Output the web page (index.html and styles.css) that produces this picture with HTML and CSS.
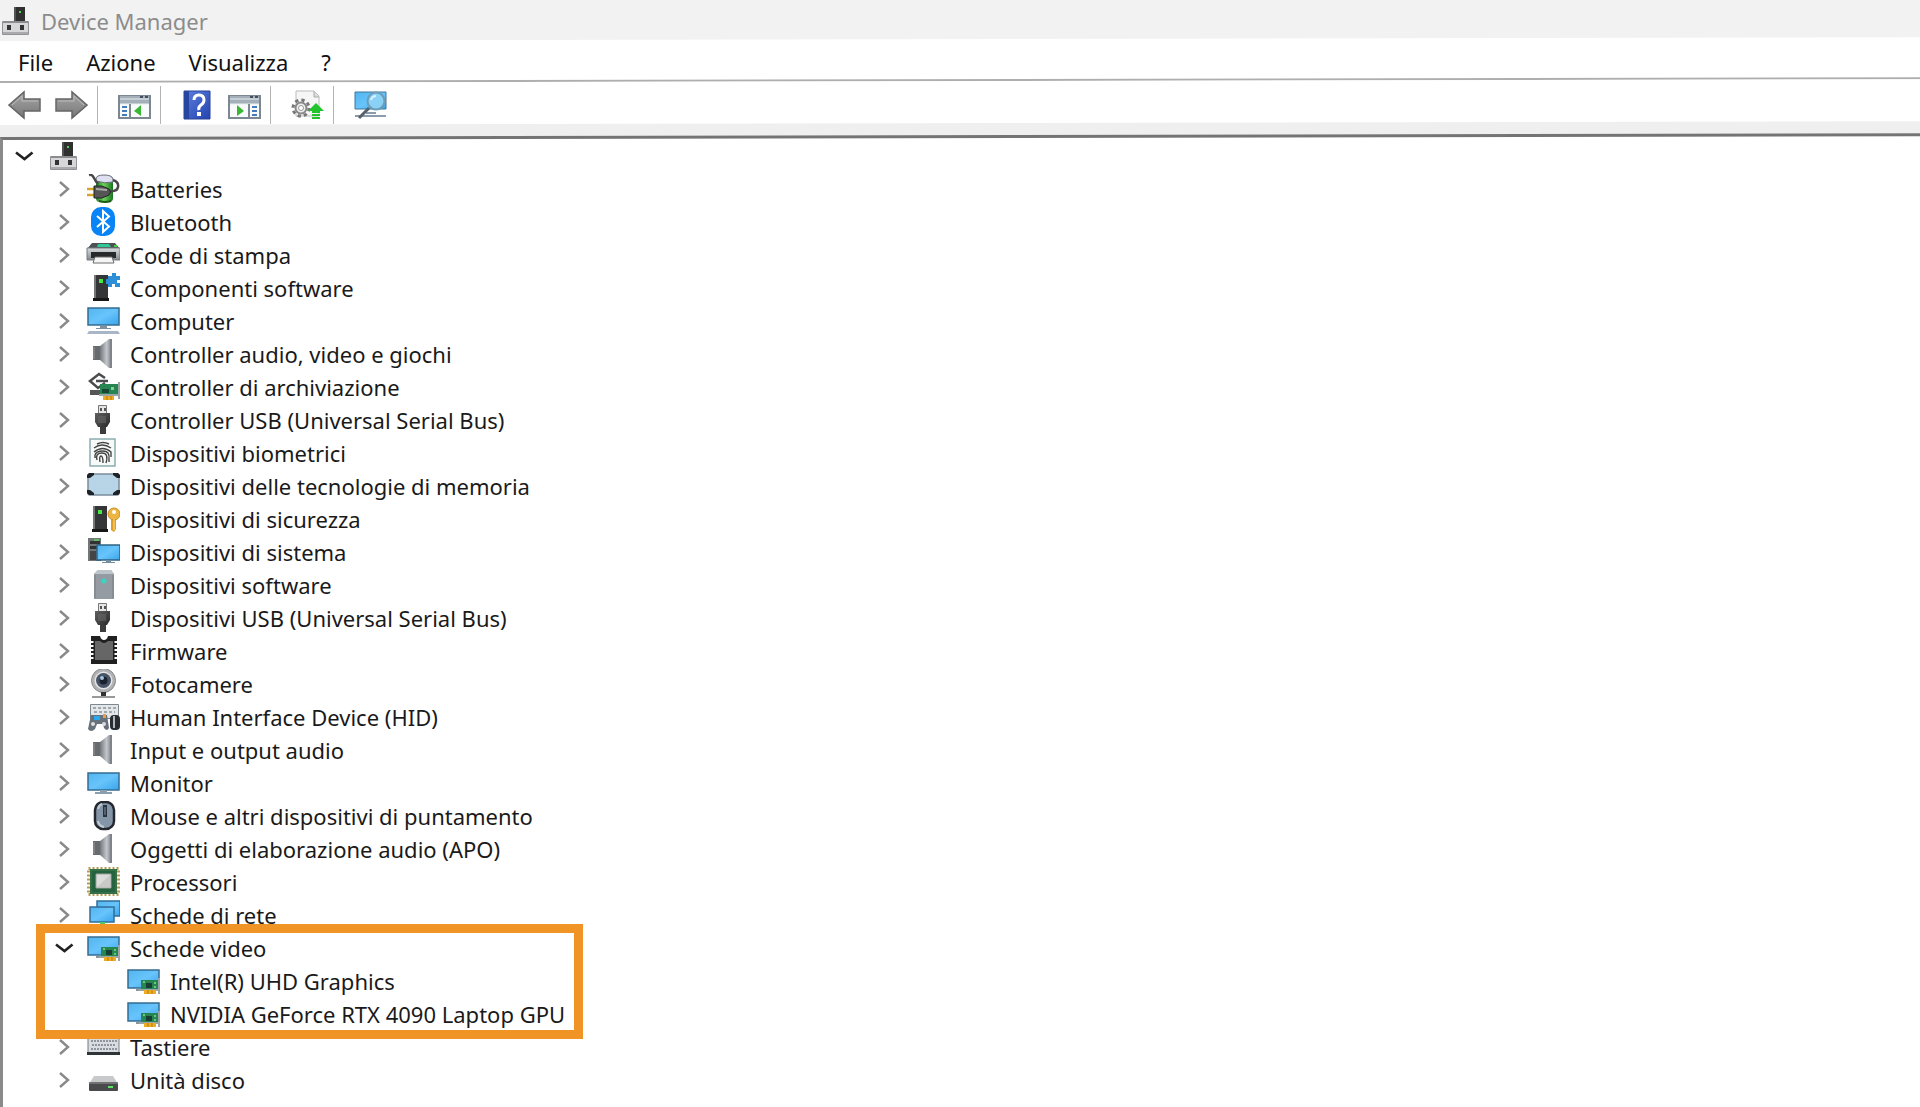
FILE: index.html
```html
<!DOCTYPE html>
<html lang="it">
<head>
<meta charset="utf-8">
<title>Device Manager</title>
<link rel="stylesheet" href="styles.css">
</head>
<body>
<svg class="sprite" aria-hidden="true">
  <defs>
    <linearGradient id="screen" x1="0" y1="0" x2="1" y2="1"><stop offset="0" stop-color="#52b4ee"/><stop offset=".5" stop-color="#68c4fb"/><stop offset="1" stop-color="#38a4ec"/></linearGradient>
    <linearGradient id="metal" x1="0" x2="1"><stop offset="0" stop-color="#74777b"/><stop offset=".55" stop-color="#c3c6ca"/><stop offset="1" stop-color="#777b82"/></linearGradient>
    <linearGradient id="steel" x1="0" y1="0" x2="0" y2="1"><stop offset="0" stop-color="#d9dcdf"/><stop offset="1" stop-color="#85898e"/></linearGradient>
    <linearGradient id="dark" x1="0" y1="0" x2="1" y2="1"><stop offset="0" stop-color="#606060"/><stop offset="1" stop-color="#292929"/></linearGradient>
    <linearGradient id="arrow" x1="0" y1="0" x2="0" y2="1"><stop offset="0" stop-color="#a7a7a7"/><stop offset="1" stop-color="#777"/></linearGradient>
    <linearGradient id="book" x1="0" y1="0" x2="1" y2="1"><stop offset="0" stop-color="#5d7fe0"/><stop offset="1" stop-color="#2444ae"/></linearGradient>
    <linearGradient id="green" x1="0" x2="1"><stop offset="0" stop-color="#187c1d"/><stop offset=".45" stop-color="#70d35d"/><stop offset="1" stop-color="#15751d"/></linearGradient>
  </defs>
  <symbol id="i-chevron" viewBox="0 0 24 24"><path d="M8 5l8 7-8 7" fill="none" stroke="#898989" stroke-width="2.4"/></symbol>
  <symbol id="i-open" viewBox="0 0 24 24"><path d="M4 8.500l8.500 6.500 8-6.500" fill="none" stroke="#222" stroke-width="2.600"/></symbol>
  <symbol id="i-root" viewBox="0 0 34 30"><path d="M16 1h11v14H16z" fill="#303030"/><path d="M17 1v14" stroke="#777"/><path d="M21 5h2v2h-2z" fill="#58d052"/><path d="M4.500 15.500h26v13h-26z" fill="#d7d7db" stroke="#929297"/><path d="M5 16h25" stroke="#8c8c90" stroke-width="2"/><path d="M9 19h4v5H9zM22 19h4v5h-4z" fill="#333"/><path d="M5 27h25" stroke="#a9a9ae" stroke-width="2"/></symbol>
  <symbol id="i-battery" viewBox="0 0 34 30"><rect x="10" y="2" width="17" height="26" rx="4" fill="url(#green)"/><path d="M10 7V5q0-4 8-4t9 4v3q-8 2-17-1z" fill="#dedff0" stroke="#666b77"/><path d="M3 1q3-1 5 3t4 6M23 17q8 1 9-4t-5-7" fill="none" stroke="#484848" stroke-width="2.500"/><path d="M1 15h8M1 21h8" stroke="#d3a72c" stroke-width="2.500"/><path d="M8 12h8l7 3q3 3 0 6l-7 3H8z" fill="#555" stroke="#242424"/><path d="M10 15l11 1" stroke="#aaa" stroke-width="2"/><path d="M13 27q6 2 12 0" stroke="#185c17" stroke-width="2" fill="none"/></symbol>
  <symbol id="i-bluetooth" viewBox="0 0 34 30"><rect x="5" width="24" height="29" rx="10" fill="#0884f7"/><path d="M11 9l12 10.500-6 5.500V4l6 5.500L11 20" fill="none" stroke="#fff" stroke-width="2"/></symbol>
  <symbol id="i-printer" viewBox="0 0 34 30"><path d="M6 3h23l5 6H1z" fill="#4c5154"/><path d="M12 4h11l2 3H11z" fill="#2fc795"/><path d="M1 8h33v12H1z" fill="url(#steel)" stroke="#777c80"/><path d="M5 12h25v6H5z" fill="#28292b"/><path d="M9 17h17l2 6H7z" fill="#f5f5f5" stroke="#6d6d6d"/><path d="M28 6h3" stroke="#4c4" stroke-width="2"/></symbol>
  <symbol id="i-tower" viewBox="0 0 34 30"><path d="M8 2h14v23H8z" fill="#343637"/><path d="M9 2v23" stroke="#777" stroke-width="2"/><path d="M7 25h16v3H7z" fill="#171717"/><path d="M13 6h4v4h-4z" fill="#49e944"/></symbol>
  <symbol id="i-component" viewBox="0 0 34 30"><use href="#i-tower"/><path d="M22 3h4V0h4v3h4v4h-3v3h3v4h-5v-3h-3v3h-4v-3h-2V6h2z" fill="#2c8fd7"/></symbol>
  <symbol id="i-computer" viewBox="0 0 34 30"><path d="M2 2h31v17H2z" fill="url(#screen)" stroke="#356c91" stroke-width="1.500"/><path d="M14 20h7v2h4v1H10v-1h4z" fill="#80909d"/><path d="M3 25h29l2 3H1z" fill="#a9b6c5"/></symbol>
  <symbol id="i-speaker" viewBox="0 0 34 30"><path d="M7 7h8v14H7z" fill="#666b70"/><path d="M14 7L23 0h3v29h-3l-9-8z" fill="url(#metal)"/><path d="M25 0v29" stroke="#7e838b" stroke-width="2"/><path d="M8 8v12" stroke="#999" stroke-width="1"/></symbol>
  <symbol id="i-card" viewBox="0 0 34 30"><path d="M15 14h17v10H15z" fill="#278552"/><path d="M13 24h20M33 12v16" stroke="#9ba5a9" stroke-width="2"/><path d="M18 24h12v4H18z" fill="#edab22"/><path d="M22 24v4M26 24v4" stroke="#b77d14"/><path d="M20 17h6v5h-6z" fill="#193e33"/><path d="M17 16h2M28 17h2M28 21h2" stroke="#7fe090" stroke-width="1.500"/></symbol>
  <symbol id="i-storage" viewBox="0 0 34 30"><path d="M19 6l-6-4-9 7 8 7 7-5M10 9h12" fill="none" stroke="#4a4c4d" stroke-width="2.500"/><path d="M4 18h10v5H4z" fill="#555"/><path d="M14 12h18v11H14z" fill="#278552"/><path d="M13 23h20M33 10v17" stroke="#9ba5a9" stroke-width="2"/><path d="M17 24h11v4H17z" fill="#edab22"/><path d="M21 24v4M25 24v4" stroke="#b77d14"/><path d="M16 17h7v4h-7z" fill="#174834"/><path d="M25 15h3v3h-3z" fill="#86d292"/></symbol>
  <symbol id="i-usb" viewBox="0 0 34 30"><path d="M12.500.5h8v8h-8z" fill="#e5e5e5" stroke="#777"/><path d="M14 3h2v3h-2zM18 3h2v3h-2z" fill="#555"/><path d="M9 8h15v9l-3 5h-9l-3-5z" fill="url(#dark)"/><path d="M14 22h6v7h-6z" fill="#3c3c3c"/><path d="M12 11h8v7h-8z" fill="#666" opacity=".6"/></symbol>
  <symbol id="i-finger" viewBox="0 0 34 30"><path d="M4 1h25v27H4z" fill="#f6faf9" stroke="#8cadb0" stroke-width="1.500"/><g fill="none" stroke="#444" stroke-width="1.400"><path d="M11 6q6-3 12 0M8 10q8-6 17 0M8 14q9-7 17 0v5M9 17q1-4 8-4t6 8v3M11 22q-2-7 5-7t4 10M14 24q-1-6 1-6t2 7M9 17v3"/></g></symbol>
  <symbol id="i-memory" viewBox="0 0 34 30"><rect x="2" y="3" width="31" height="21" rx="2" fill="#b8d5e7" stroke="#788e9c" stroke-width="1.500"/><path d="M1 7V4l2-2h5v2l-4 3zM27 2h5l2 2v3h-3l-4-3zM1 19v3l2 2h5v-2l-4-3zM34 19v3l-2 2h-5v-2l4-3z" fill="#202326"/></symbol>
  <symbol id="i-security" viewBox="0 0 34 30"><use href="#i-tower" x="-1"/><path d="M25 13h5v12l-2 3-3-2z" fill="#dd9e24"/><circle cx="28" cy="10" r="6" fill="#edb642" stroke="#c88c25"/><circle cx="28" cy="8" r="2" fill="#fff"/><path d="M28 15v11" stroke="#ffe096"/></symbol>
  <symbol id="i-system" viewBox="0 0 34 30"><path d="M2 1h13v23H2z" fill="#717679"/><path d="M4 4h10v3H4zM4 9h7v3H4z" fill="#303332"/><path d="M8 3h5" stroke="#64ba67" stroke-width="2"/><path d="M4 14h6v9H4z" fill="#444"/><path d="M11 8h23v15H11z" fill="url(#screen)" stroke="#2f6384" stroke-width="1.500"/><path d="M20 23h5v2h4v1H16v-1h4z" fill="#738d9c"/></symbol>
  <symbol id="i-software" viewBox="0 0 34 30"><path d="M8 4l4-4h13l3 4v25H8z" fill="#949ba2"/><path d="M8 4l4-4h13l3 4z" fill="#bdc4ca"/><path d="M9 5v23M27 5v23" stroke="#777f86"/><circle cx="18" cy="11" r="2.500" fill="#35d8c2"/></symbol>
  <symbol id="i-firmware" viewBox="0 0 34 30"><path d="M5 0h9q1 4 4 4t4-4h9v28H5z" fill="#202020"/><path d="M9 5h5q4 4 8 0h5v19H9z" fill="#666"/><path d="M6 5v20M30 5v20" stroke="#fff" stroke-width="3" stroke-dasharray="2 2"/></symbol>
  <symbol id="i-camera" viewBox="0 0 34 30"><circle cx="17.500" cy="11.500" r="12" fill="#b0b2b4" stroke="#888"/><circle cx="17.500" cy="11.500" r="9" fill="#e5e5e5"/><circle cx="17.500" cy="11.500" r="7.500" fill="#485566"/><circle cx="17.500" cy="11.500" r="4" fill="#19222e"/><circle cx="16" cy="9" r="2" fill="#a2c4de"/><path d="M15 23h5v4h-5z" fill="#333"/><path d="M6 28h23" stroke="#999" stroke-width="2"/></symbol>
  <symbol id="i-hid" viewBox="0 0 34 30"><path d="M4.500 2.500h28v14h-28z" fill="#e4e7ea" stroke="#7c8790"/><path d="M7 6h23M8 10h21" stroke="#a0a7ad" stroke-width="2" stroke-dasharray="3 2"/><path d="M5 13h16l2 13q-2 4-5 0l-1-4h-6l-2 5q-4 4-7 0z" fill="#66717c"/><path d="M8 14h6v4H8z" fill="#29a8ee"/><path d="M17 12h3v4h-3z" fill="#e6a04b"/><circle cx="7" cy="22" r="2" fill="#ddd"/><circle cx="18" cy="22" r="2" fill="#ddd"/><rect x="24" y="13" width="10" height="15" rx="4" fill="#272c30"/><path d="M28 14v12" stroke="#b0b6bb" stroke-width="2"/></symbol>
  <symbol id="i-monitor" viewBox="0 0 34 30"><path d="M2 5h31v17H2z" fill="url(#screen)" stroke="#356c91" stroke-width="1.500"/><path d="M14 22h7v2h5v2H9v-2h5z" fill="#8ba0af"/></symbol>
  <symbol id="i-mouse" viewBox="0 0 34 30"><rect x="9" y="1" width="19" height="27" rx="8" fill="#8495a7" stroke="#24282e" stroke-width="2.500"/><path d="M12 8q1-4 4-5M12 20q1 5 6 6" stroke="#c0cbd5" stroke-width="2" fill="none"/><path d="M17 4h4v12h-4z" fill="#29333e"/><path d="M19 6v8" stroke="#7e8e9f"/></symbol>
  <symbol id="i-cpu" viewBox="0 0 34 30"><path d="M2.500 1.500h30v26h-30z" fill="none" stroke="#b69a51" stroke-width="3" stroke-dasharray="2 2"/><path d="M4 2h27v25H4z" fill="#24633d"/><path d="M5 3h25v23H5z" fill="none" stroke="#477d52"/><path d="M10 7h15v14H10z" fill="#dcdcda" stroke="#9ba39b"/><path d="M11 20L24 8v12z" fill="#c8cac8"/></symbol>
  <symbol id="i-network" viewBox="0 0 34 30"><path d="M11 1h23v15H11z" fill="url(#screen)" stroke="#306e98" stroke-width="1.500"/><path d="M4 7h24v15H4z" fill="url(#screen)" stroke="#306e98" stroke-width="1.500"/><path d="M14 22h5v2h5v3H9v-3h5z" fill="#4dc963"/><path d="M3 26h27" stroke="#69a878"/></symbol>
  <symbol id="i-video" viewBox="0 0 34 30"><path d="M2 4h31v18H2z" fill="url(#screen)" stroke="#356c91" stroke-width="1.500"/><path d="M10 24h7" stroke="#60737d" stroke-width="1.500"/><use href="#i-card"/></symbol>
  <symbol id="i-keyboard" viewBox="0 0 34 30"><path d="M2 4h31v17H2z" fill="#d9dce0" stroke="#777d83"/><path d="M5 9h26M6 13h24M5 17h26" stroke="#8e959c" stroke-width="2" stroke-dasharray="2 1"/><path d="M1 20h33v3H1z" fill="#30353a"/></symbol>
  <symbol id="i-disk" viewBox="0 0 34 30"><path d="M8 11h19l5 8H3z" fill="#c7c9cb"/><rect x="3" y="17" width="29" height="9" rx="1" fill="#484a4c"/><path d="M3 18h29" stroke="#999"/><path d="M22 21h5v2h-5z" fill="#5be264"/></symbol>
  <symbol id="i-back" viewBox="0 0 33 30"><path d="M1 15L16 2v7h16v12H16v7z" fill="url(#arrow)" stroke="#656565" stroke-width="1.500"/><path d="M4 15L14 6v5h16" fill="none" stroke="#bbb"/></symbol>
  <symbol id="i-forward" viewBox="0 0 33 30"><path d="M32 15L17 2v7H1v12h16v7z" fill="url(#arrow)" stroke="#656565" stroke-width="1.500"/><path d="M29 15L19 6v5H3" fill="none" stroke="#bbb"/></symbol>
  <symbol id="i-pane" viewBox="0 0 33 30"><path d="M1 6h31v22H1z" fill="#f8fafb" stroke="#7c8792" stroke-width="2"/><path d="M2 6h29v8H2z" fill="#a4afba"/><path d="M2 9h29M2 14h29" stroke="#e8edf0"/><path d="M22 7h3M27 7h3" stroke="#415162" stroke-width="2"/></symbol>
  <symbol id="i-pane-left" viewBox="0 0 33 30"><use href="#i-pane"/><path d="M12 14v13" stroke="#7c8792" stroke-width="2"/><path d="M4 17h5M4 21h5M4 25h5" stroke="#427cbc" stroke-width="2"/><path d="M23 15v11l-7-5z" fill="#38b832"/></symbol>
  <symbol id="i-pane-right" viewBox="0 0 33 30"><use href="#i-pane"/><path d="M21 14v13" stroke="#7c8792" stroke-width="2"/><path d="M24 17h5M24 21h5M24 25h5" stroke="#427cbc" stroke-width="2"/><path d="M9 15v11l7-5z" fill="#38b832"/></symbol>
  <symbol id="i-help" viewBox="0 0 33 30"><path d="M3 1h26v28H3z" fill="url(#book)" stroke="#29439a"/><path d="M3 1h5v28H3z" fill="#27469f"/><path d="M13 10q0-5 5-5t5 5q0 3-3 5t-2 5" fill="none" stroke="#fff" stroke-width="3"/><path d="M16 22h4v4h-4z" fill="#fff"/></symbol>
  <symbol id="i-update" viewBox="0 0 33 30"><path d="M5 1h18l5 5v20H5z" fill="#f6f6f6" stroke="#bbb"/><path d="M23 1v6h5" fill="#ddd" stroke="#aaa"/><circle cx="10" cy="18" r="8" fill="none" stroke="#777" stroke-width="3" stroke-dasharray="3.300 3"/><circle cx="10" cy="18" r="5.500" fill="#eee" stroke="#888" stroke-width="2"/><circle cx="10" cy="18" r="2.500" fill="#fff" stroke="#999"/><path d="M25 13l8 8h-4v2h-8v-2h-4z" fill="#21c52b"/><path d="M21 25h8M21 28h8" stroke="#21c52b" stroke-width="2"/></symbol>
  <symbol id="i-scan" viewBox="0 0 33 30"><path d="M1 2h31v17H1z" fill="url(#screen)" stroke="#3d789c"/><path d="M1 26h31M12 23h10" stroke="#8a9cab" stroke-width="2"/><path d="M15 18L5 28" stroke="#55616a" stroke-width="3"/><circle cx="22" cy="11" r="8.500" fill="#89d1f5" stroke="#6b9db9" stroke-width="2"/><path d="M17 10q1-4 5-4" fill="none" stroke="#d8f2ff" stroke-width="2"/></symbol>
</svg>

<header class="title-bar bar">
  <svg class="icon" aria-hidden="true"><use href="#i-root"/></svg>
  <h1 class="title">Device Manager</h1>
</header>
<nav class="menu-bar bar" aria-label="Menu">
  <button class="menu-item">File</button>
  <button class="menu-item">Azione</button>
  <button class="menu-item">Visualizza</button>
  <button class="menu-item">?</button>
</nav>
<div class="toolbar bar" role="toolbar" aria-label="Strumenti">
  <div class="tool-group">
    <button class="tool" aria-label="Indietro"><svg><use href="#i-back"/></svg></button>
    <button class="tool" aria-label="Avanti"><svg><use href="#i-forward"/></svg></button>
  </div>
  <div class="tool-group">
    <button class="tool" aria-label="Mostra albero"><svg><use href="#i-pane-left"/></svg></button>
  </div>
  <div class="tool-group">
    <button class="tool" aria-label="Guida"><svg><use href="#i-help"/></svg></button>
    <button class="tool" aria-label="Mostra riquadro azioni"><svg><use href="#i-pane-right"/></svg></button>
  </div>
  <div class="tool-group">
    <button class="tool" aria-label="Aggiorna driver"><svg><use href="#i-update"/></svg></button>
  </div>
  <div class="tool-group">
    <button class="tool" aria-label="Rileva modifiche hardware"><svg><use href="#i-scan"/></svg></button>
  </div>
</div>
<main class="tree-panel bar">
  <ul class="tree">
    <li>
      <div class="row"><button class="toggle" aria-label="Comprimi"><svg><use href="#i-open"/></svg></button><svg class="icon"><use href="#i-root"/></svg></div>
      <ul class="branch">
        <li class="row"><button class="toggle" aria-label="Espandi"><svg><use href="#i-chevron"/></svg></button><svg class="icon"><use href="#i-battery"/></svg><span>Batteries</span></li>
        <li class="row"><button class="toggle" aria-label="Espandi"><svg><use href="#i-chevron"/></svg></button><svg class="icon"><use href="#i-bluetooth"/></svg><span>Bluetooth</span></li>
        <li class="row"><button class="toggle" aria-label="Espandi"><svg><use href="#i-chevron"/></svg></button><svg class="icon"><use href="#i-printer"/></svg><span>Code di stampa</span></li>
        <li class="row"><button class="toggle" aria-label="Espandi"><svg><use href="#i-chevron"/></svg></button><svg class="icon"><use href="#i-component"/></svg><span>Componenti software</span></li>
        <li class="row"><button class="toggle" aria-label="Espandi"><svg><use href="#i-chevron"/></svg></button><svg class="icon"><use href="#i-computer"/></svg><span>Computer</span></li>
        <li class="row"><button class="toggle" aria-label="Espandi"><svg><use href="#i-chevron"/></svg></button><svg class="icon"><use href="#i-speaker"/></svg><span>Controller audio, video e giochi</span></li>
        <li class="row"><button class="toggle" aria-label="Espandi"><svg><use href="#i-chevron"/></svg></button><svg class="icon"><use href="#i-storage"/></svg><span>Controller di archiviazione</span></li>
        <li class="row"><button class="toggle" aria-label="Espandi"><svg><use href="#i-chevron"/></svg></button><svg class="icon"><use href="#i-usb"/></svg><span>Controller USB (Universal Serial Bus)</span></li>
        <li class="row"><button class="toggle" aria-label="Espandi"><svg><use href="#i-chevron"/></svg></button><svg class="icon"><use href="#i-finger"/></svg><span>Dispositivi biometrici</span></li>
        <li class="row"><button class="toggle" aria-label="Espandi"><svg><use href="#i-chevron"/></svg></button><svg class="icon"><use href="#i-memory"/></svg><span>Dispositivi delle tecnologie di memoria</span></li>
        <li class="row"><button class="toggle" aria-label="Espandi"><svg><use href="#i-chevron"/></svg></button><svg class="icon"><use href="#i-security"/></svg><span>Dispositivi di sicurezza</span></li>
        <li class="row"><button class="toggle" aria-label="Espandi"><svg><use href="#i-chevron"/></svg></button><svg class="icon"><use href="#i-system"/></svg><span>Dispositivi di sistema</span></li>
        <li class="row"><button class="toggle" aria-label="Espandi"><svg><use href="#i-chevron"/></svg></button><svg class="icon"><use href="#i-software"/></svg><span>Dispositivi software</span></li>
        <li class="row"><button class="toggle" aria-label="Espandi"><svg><use href="#i-chevron"/></svg></button><svg class="icon"><use href="#i-usb"/></svg><span>Dispositivi USB (Universal Serial Bus)</span></li>
        <li class="row"><button class="toggle" aria-label="Espandi"><svg><use href="#i-chevron"/></svg></button><svg class="icon"><use href="#i-firmware"/></svg><span>Firmware</span></li>
        <li class="row"><button class="toggle" aria-label="Espandi"><svg><use href="#i-chevron"/></svg></button><svg class="icon"><use href="#i-camera"/></svg><span>Fotocamere</span></li>
        <li class="row"><button class="toggle" aria-label="Espandi"><svg><use href="#i-chevron"/></svg></button><svg class="icon"><use href="#i-hid"/></svg><span>Human Interface Device (HID)</span></li>
        <li class="row"><button class="toggle" aria-label="Espandi"><svg><use href="#i-chevron"/></svg></button><svg class="icon"><use href="#i-speaker"/></svg><span>Input e output audio</span></li>
        <li class="row"><button class="toggle" aria-label="Espandi"><svg><use href="#i-chevron"/></svg></button><svg class="icon"><use href="#i-monitor"/></svg><span>Monitor</span></li>
        <li class="row"><button class="toggle" aria-label="Espandi"><svg><use href="#i-chevron"/></svg></button><svg class="icon"><use href="#i-mouse"/></svg><span>Mouse e altri dispositivi di puntamento</span></li>
        <li class="row"><button class="toggle" aria-label="Espandi"><svg><use href="#i-chevron"/></svg></button><svg class="icon"><use href="#i-speaker"/></svg><span>Oggetti di elaborazione audio (APO)</span></li>
        <li class="row"><button class="toggle" aria-label="Espandi"><svg><use href="#i-chevron"/></svg></button><svg class="icon"><use href="#i-cpu"/></svg><span>Processori</span></li>
        <li class="row"><button class="toggle" aria-label="Espandi"><svg><use href="#i-chevron"/></svg></button><svg class="icon"><use href="#i-network"/></svg><span>Schede di rete</span></li>
        <li class="highlight">
          <div class="row"><button class="toggle" aria-label="Comprimi"><svg><use href="#i-open"/></svg></button><svg class="icon"><use href="#i-video"/></svg><span>Schede video</span></div>
          <ul class="branch">
            <li class="row leaf"><svg class="icon"><use href="#i-video"/></svg><span>Intel(R) UHD Graphics</span></li>
            <li class="row leaf"><svg class="icon"><use href="#i-video"/></svg><span>NVIDIA GeForce RTX 4090 Laptop GPU</span></li>
          </ul>
        </li>
        <li class="row"><button class="toggle" aria-label="Espandi"><svg><use href="#i-chevron"/></svg></button><svg class="icon"><use href="#i-keyboard"/></svg><span>Tastiere</span></li>
        <li class="row"><button class="toggle" aria-label="Espandi"><svg><use href="#i-chevron"/></svg></button><svg class="icon"><use href="#i-disk"/></svg><span>Unità disco</span></li>
      </ul>
    </li>
  </ul>
</main>
</body>
</html>
```

FILE: styles.css
```css
*,
*::before,
*::after {
  box-sizing: border-box;
}

html {
  overflow-x: hidden;
}

body {
  margin: 0;
  min-height: 100vh;
  display: flex;
  flex-direction: column;
  background: #efefef;
  color: #1a1a1a;
  font: 22px/30px "Noto Sans", "Open Sans", sans-serif;
}

button {
  border: 0;
  padding: 0;
  background: none;
  color: inherit;
  font: inherit;
}

ul {
  list-style: none;
  margin: 0;
  padding: 0;
}

.sprite {
  position: absolute;
  width: 0;
  height: 0;
}

/* Each bar paints its surface on a layer that rises slightly to the right. */
.bar {
  position: relative;
  z-index: 0;
}

.bar::before {
  content: "";
  position: absolute;
  inset: 0;
  z-index: -1;
  transform: skewY(-0.11deg);
  transform-origin: left top;
}

.icon {
  flex: none;
  width: 34px;
  height: 30px;
  overflow: visible;
}

.title-bar {
  display: flex;
  align-items: center;
  gap: 9px;
  height: 41px;
  background: #f2f2f2;
}

.title-bar .icon {
  margin-left: -2px;
}

.title {
  margin: 0;
  color: #8c8c8c;
  font-size: 22px;
  font-weight: 400;
}

.menu-bar {
  display: flex;
  align-items: center;
  gap: 33px;
  height: 42px;
  padding-left: 18px;
  color: #111;
}

.menu-bar::before {
  background: #fff;
  border-bottom: 2px solid #aeaeae;
}

.toolbar {
  display: flex;
  align-items: center;
  height: 42px;
  padding: 2px 0 0 8px;
}

.toolbar::before {
  background: #fff;
}

.tool-group {
  display: flex;
  align-items: center;
  gap: 14px;
  height: 38px;
  margin-right: 20px;
  padding-right: 9px;
  border-right: 1px solid #b4b4b4;
}

.tool-group:last-child {
  border-right: 0;
}

.tool {
  display: flex;
}

.tool svg {
  width: 33px;
  height: 30px;
}

.tree-panel {
  flex: 1;
  margin-top: 12px;
  padding: 2px 0 8px 12px;
}

.tree-panel::before {
  background: #fff;
  border-top: 3px solid #747474;
  border-left: 3px solid #8a8a8a;
  bottom: -8px;
}

.row {
  display: flex;
  align-items: center;
  gap: 10px;
  height: 33px;
  white-space: nowrap;
}

.branch {
  padding-left: 40px;
}

.toggle {
  display: flex;
  flex: none;
}

.toggle svg {
  width: 24px;
  height: 24px;
}

.leaf {
  padding-left: 34px;
}

.highlight {
  position: relative;
}

.highlight::after {
  content: "";
  position: absolute;
  top: -7px;
  bottom: -9px;
  left: -16px;
  width: 547px;
  border: 9px solid #ef9425;
  pointer-events: none;
}
```
